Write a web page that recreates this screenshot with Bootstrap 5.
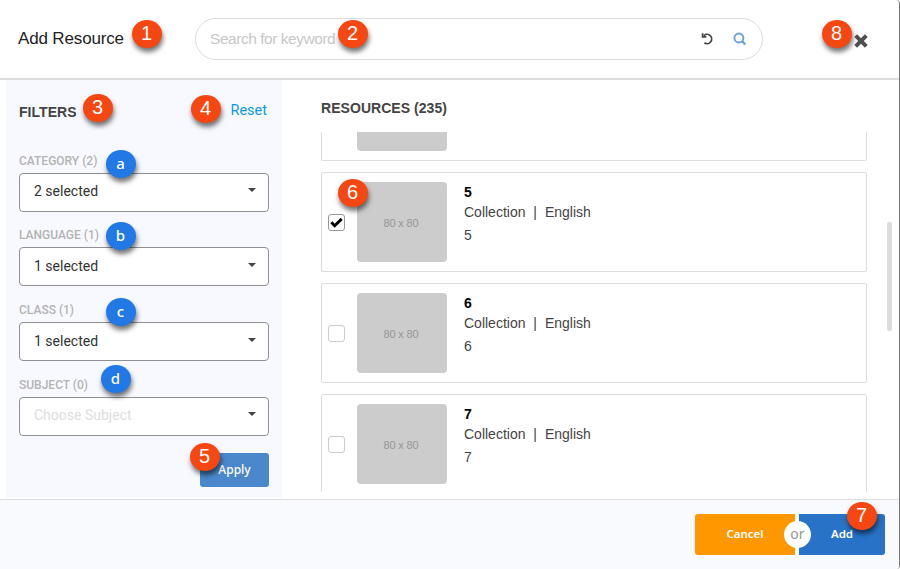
<!DOCTYPE html>
<html lang="en">
<head>
<meta charset="utf-8">
<meta name="viewport" content="width=device-width, initial-scale=1">
<title>Add Resource</title>
<link href="https://cdn.jsdelivr.net/npm/bootstrap@5.3.0/dist/css/bootstrap.min.css" rel="stylesheet">
<style>
body{font-family:"Liberation Sans",Arial,sans-serif;font-size:14px;line-height:20px;color:#444;background:#fff}
.dialog{width:900px;height:569px;border-right:1px solid #777;border-radius:4px 4px 4px 0}
.dialog-head{height:80px;border-bottom:2px solid #ddd;padding:18px 31px 18px 18px}
.dialog-title{font-size:17px;letter-spacing:-.15px;color:#222;width:177px;line-height:24px;margin-top:-1px}
.search-box{width:568px;height:42px;border:1px solid #dcdcdc;border-radius:21px;padding:0 15px 0 14px}
.search-box input{font-size:15.5px;letter-spacing:-.46px;color:#444}
.search-box input::placeholder{color:#c8c8c8;opacity:1}
.undo-icon{margin-right:15px}
.close-icon{margin-top:15.5px}
.filters{width:276px;height:418px;margin-left:6px;background:#f8f9ff;padding:20px 13px 0}
.panel-title{font-size:14px;font-weight:700;color:#444;letter-spacing:.05px;line-height:20px}
.filter-head{height:24px;padding-top:2px}
.reset-link{color:#0d9bdb;font:14.5px/20px Roboto,sans-serif;margin:-1px 2px 0 0}
.filter-fields{margin-top:29px}
.field-label{font:500 12px/16px Roboto,sans-serif;color:#b3b3b3;height:16px;margin-bottom:4px}
.picker{height:39px;border:1px solid #8f9094;border-radius:4px;font:14px/36px Roboto,sans-serif;color:#333;padding:0 12px 0 14px}
.picker span{margin-top:-2px}
.picker.raised{padding-bottom:2px}
.picker.unset{color:#dedede}
.caret-down{width:8px;height:4px;margin-top:-3px}
.field{margin-bottom:16px}
.field:first-child{margin-bottom:15px}
.apply-btn{width:69px;height:34px;border-radius:3px;background:#4a88cb;font:500 12px/34px "Noto Sans",sans-serif;margin-top:17px}
.results{width:546px;margin-left:39px;padding-top:18px}
.result-list{height:360px;margin-top:14px;gap:11px}
.result{flex:0 0 100px;border:1px solid #ddd;border-radius:2px;padding:9px 6px}
.result-list .result:first-child{margin-top:-71px}
.tick{width:17px;height:17px;border:1px solid #ccc;border-radius:3px;margin-top:1px}
.tick.on{border-color:#999}
.thumb{width:90px;height:80px;border-radius:4px;background:#ccc;color:#969696;font-size:11px;letter-spacing:-.15px;margin:0 17px 0 12px;padding:2px 2px 0 0}
.result-name{color:#000;font-weight:700;line-height:20px}
.result-meta{word-spacing:4px;line-height:20px}
.result-note{line-height:20px;margin-top:3px}
.scroll-thumb{width:5px;height:109px;border-radius:2px;background:#dcdcdc;margin:142px 0 0 20px}
.dialog-foot{height:70px;margin-top:1px;border-top:1px solid #ddd;background:#f9fafd;padding:14px 14px 0 0}
.foot-btn{height:41px;font:600 11.5px/38px "Noto Sans",sans-serif}
.foot-btn.cancel-btn,.foot-btn.add-btn{padding-bottom:2px!important}
.cancel-btn{width:100px;background:#ff9800;border-radius:3px 0 0 3px}
.add-btn{width:86px;background:#2873c8;border-radius:0 3px 3px 0}
.choice-gap{width:4px;background:#fff}
.choice-or{width:27px;height:27px;left:-11px;top:7px;color:#999;font:14px/26px "Noto Sans",sans-serif}
.callout{width:30px;height:28px;border-radius:50%;background:#f64612;color:#fff;font:20px/27px "Liberation Sans",sans-serif;text-align:center;box-shadow:1px 4px 5px rgba(0,0,0,.55);z-index:5;margin-left:-.5px}
.callout.sub{background:#2278e4;font:500 15px/27px "Noto Sans",sans-serif}
.c1{left:132px;top:19.5px}.c2{left:338px;top:19.5px}.c8{left:822px;top:19.5px}
.c3{left:83px;top:93.5px}.c4{left:191px;top:94.5px}.ca{left:106px;top:149.5px}
.cb{left:106px;top:222px}.cc{left:106px;top:297.5px}.cd{left:101px;top:364.5px}
.c5{left:190px;top:442.5px}.c6{left:338px;top:178.5px}.c7{left:847px;top:501.5px}
</style>
<script src="https://cdn.jsdelivr.net/npm/bootstrap@5.3.0/dist/js/bootstrap.bundle.min.js"></script>
</head>
<body class="overflow-hidden">
<div class="dialog position-relative overflow-hidden">
  <header class="dialog-head d-flex">
    <h1 class="dialog-title mb-0 fw-normal align-self-center">Add Resource</h1>
    <div class="search-box d-flex align-items-center">
      <input class="border-0 p-0 bg-transparent flex-grow-1" type="text" placeholder="Search for keyword" aria-label="Search">
      <svg width="14" height="14" viewBox="0 0 14 14" fill="none" stroke="#444" stroke-width="1.7" class="undo-icon"><path d="M4 3.6A4.6 4.6 0 1 1 4.4 10.8M2.6 1.2v3.7h3.8"/></svg>
      <svg width="14" height="14" viewBox="0 0 14 14" fill="none" stroke="#6ca0dc" stroke-width="1.9" class="ms-1"><circle cx="5.9" cy="6" r="4.5"/><path d="M9 9.2l3.3 3.3" stroke-width="2.4"/></svg>
    </div>
    <svg class="close-icon ms-auto" width="14" height="14" viewBox="0 0 14 14" stroke="#505050" stroke-width="4"><path d="M1.7 1.7l10.6 10.6M12.3 1.7L1.7 12.3"/></svg>
  </header>
  <main class="d-flex">
    <aside class="filters">
      <div class="filter-head d-flex justify-content-between">
        <h2 class="panel-title mb-0">FILTERS</h2>
        <a class="reset-link text-decoration-none" href="#">Reset</a>
      </div>
      <div class="filter-fields">
        <div class="field"><div class="field-label">CATEGORY (2)</div><div class="picker raised bg-white d-flex justify-content-between align-items-center"><span>2 selected</span><svg class="caret-down" viewBox="0 0 8 4"><path d="M0 0h8L4 4z" fill="#444"/></svg></div></div>
        <div class="field"><div class="field-label">LANGUAGE (1)</div><div class="picker bg-white d-flex justify-content-between align-items-center"><span>1 selected</span><svg class="caret-down" viewBox="0 0 8 4"><path d="M0 0h8L4 4z" fill="#444"/></svg></div></div>
        <div class="field"><div class="field-label">CLASS (1)</div><div class="picker bg-white d-flex justify-content-between align-items-center"><span>1 selected</span><svg class="caret-down" viewBox="0 0 8 4"><path d="M0 0h8L4 4z" fill="#444"/></svg></div></div>
        <div class="field"><div class="field-label">SUBJECT (0)</div><div class="picker raised unset bg-white d-flex justify-content-between align-items-center"><span>Choose Subject</span><svg class="caret-down" viewBox="0 0 8 4"><path d="M0 0h8L4 4z" fill="#444"/></svg></div></div>
      </div>
      <button class="apply-btn border-0 p-0 text-white d-block ms-auto" type="button">Apply</button>
    </aside>
    <section class="results">
      <h2 class="panel-title mb-0">RESOURCES (235)</h2>
      <div class="result-list overflow-hidden d-flex flex-column">
        <article class="result d-flex"><span class="tick align-self-center"></span><div class="thumb"></div></article>
        <article class="result d-flex">
          <span class="tick on align-self-center d-flex align-items-center justify-content-center"><svg width="13" height="11" viewBox="0 0 13 11" fill="none" stroke="#000" stroke-width="2.9"><path d="M1.3 5.3l3.4 3.4 7-6.8"/></svg></span>
          <div class="thumb d-flex align-items-center justify-content-center">80 x 80</div>
          <div><div class="result-name">5</div><div class="result-meta">Collection | English</div><div class="result-note">5</div></div>
        </article>
        <article class="result d-flex">
          <span class="tick align-self-center"></span>
          <div class="thumb d-flex align-items-center justify-content-center">80 x 80</div>
          <div><div class="result-name">6</div><div class="result-meta">Collection | English</div><div class="result-note">6</div></div>
        </article>
        <article class="result d-flex">
          <span class="tick align-self-center"></span>
          <div class="thumb d-flex align-items-center justify-content-center">80 x 80</div>
          <div><div class="result-name">7</div><div class="result-meta">Collection | English</div><div class="result-note">7</div></div>
        </article>
      </div>
    </section>
    <div class="scroll-thumb"></div>
  </main>
  <footer class="dialog-foot d-flex justify-content-end align-items-start">
    <button class="foot-btn cancel-btn border-0 p-0 text-white" type="button">Cancel</button>
    <div class="choice-gap foot-btn position-relative"><span class="choice-or position-absolute rounded-circle bg-white text-center">or</span></div>
    <button class="foot-btn add-btn border-0 p-0 text-white" type="button">Add</button>
  </footer>
  <span class="callout position-absolute c1">1</span>
  <span class="callout position-absolute c2">2</span>
  <span class="callout position-absolute c8">8</span>
  <span class="callout position-absolute c3">3</span>
  <span class="callout position-absolute c4">4</span>
  <span class="callout position-absolute c5">5</span>
  <span class="callout position-absolute c6">6</span>
  <span class="callout position-absolute c7">7</span>
  <span class="callout sub position-absolute ca">a</span>
  <span class="callout sub position-absolute cb">b</span>
  <span class="callout sub position-absolute cc">c</span>
  <span class="callout sub position-absolute cd">d</span>
</div>
</body>
</html>
